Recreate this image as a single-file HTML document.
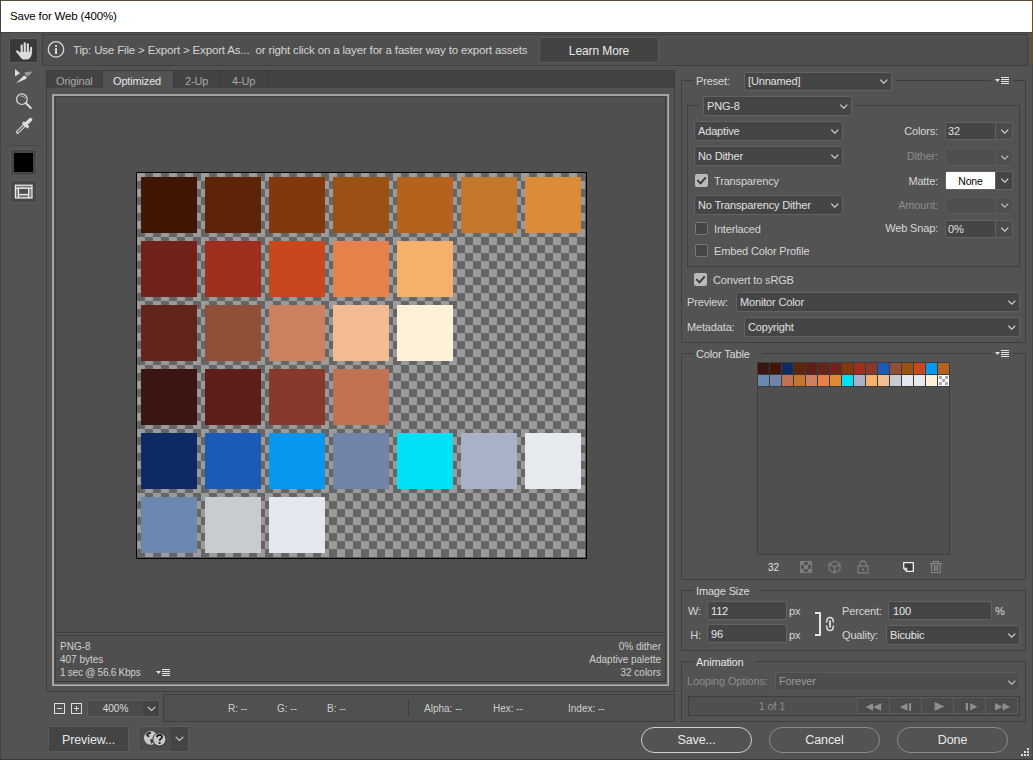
<!DOCTYPE html>
<html><head><meta charset="utf-8">
<style>
*{box-sizing:border-box;margin:0;padding:0}
html,body{width:1033px;height:760px;overflow:hidden;background:#535353}
body{position:relative;font-family:"Liberation Sans",sans-serif;font-size:11.5px;letter-spacing:-0.16px;color:#d6d6d6}
.a{position:absolute}
.t{position:absolute;white-space:nowrap;line-height:14px}
.dd{position:absolute;background:#454545;border:1px solid #626262;border-radius:2px}
.dd .tx{position:absolute;left:4px;top:2px;white-space:nowrap;line-height:14px;color:#e0e0e0}
.chev{position:absolute;width:10px;height:6px}
.fs{position:absolute;border:1px solid #3f3f3f}
.lg{position:absolute;background:#535353;padding:0 4px;line-height:14px;white-space:nowrap;color:#dcdcdc}
.cb{position:absolute;width:14px;height:14px;background:#454545;border:1px solid #626262;border-radius:2px}
.cbc{background:#8b8b8b;border-color:#8b8b8b}
.dis{color:#8a8a8a}
</style></head><body>
<!-- window frame -->
<div class="a" style="left:0;top:0;width:1033px;height:1px;background:#5a4a3a"></div>
<div class="a" style="left:0;top:0;width:1px;height:760px;background:#444"></div>
<div class="a" style="left:1032px;top:0;width:1px;height:64px;background:#6b4a2a"></div>
<div class="a" style="left:1032px;top:64px;width:1px;height:696px;background:#474747"></div>
<div class="a" style="left:0;top:759px;width:1033px;height:1px;background:#3a3a3a"></div>
<!-- title bar -->
<div class="a" style="left:1px;top:1px;width:1031px;height:31px;background:#fff"></div>
<div class="t" style="left:10px;top:9px;color:#000">Save for Web (400%)</div>
<div class="a" style="left:1px;top:32px;width:1031px;height:1px;background:#434343"></div>


<!-- left toolbar -->
<div class="a" style="left:9px;top:38px;width:29px;height:25px;background:#393939;border:1px solid #5c5c5c;border-radius:1px"></div>
<svg class="a" style="left:10px;top:38px" width="28" height="25" viewBox="0 0 28 25">
 <g fill="#dcdcdc">
  <rect x="10.6" y="6.6" width="2.1" height="9" rx="1"/>
  <rect x="13.7" y="4.3" width="2.1" height="11" rx="1"/>
  <rect x="16.8" y="5.3" width="2.1" height="10" rx="1"/>
  <rect x="19.9" y="8.8" width="2.1" height="8" rx="1" transform="rotate(6 21 12)"/>
  <path d="M10.2 14 L21.8 14 L21.4 17.5 Q20 21.5 16.5 21.6 L13.5 21.6 Q11.5 21 10 18.5 Z"/>
  <path d="M5.6 13.2 Q6.5 11.8 8 12.8 L11.5 16 L10.8 19.5 Z"/>
 </g>
</svg>
<svg class="a" style="left:12px;top:66px" width="26" height="20" viewBox="0 0 26 20">
 <path d="M3 3 L3 10.5 L8 7.3 Z" fill="#dcdcdc"/>
 <path d="M4 17.3 L12 9.6 L15 11 L14 13 Z" fill="#dcdcdc"/>
 <path d="M12.2 6.6 L21 5.3 L16 10.4 L13.5 9 Z" fill="#9a9a9a"/>
</svg>
<svg class="a" style="left:12px;top:89px" width="22" height="22" viewBox="0 0 22 22">
 <circle cx="9.9" cy="10.2" r="5.3" fill="none" stroke="#dcdcdc" stroke-width="1.2"/>
 <path d="M8.6 6.9 Q11.8 6.7 13.2 9.6" fill="none" stroke="#dcdcdc" stroke-width="0.8"/>
 <path d="M14 14.3 L18.8 19" stroke="#dcdcdc" stroke-width="2" stroke-linecap="round"/>
</svg>
<svg class="a" style="left:12px;top:116px" width="22" height="22" viewBox="0 0 22 22">
 <path d="M5.6 16.2 L12.8 9" stroke="#dcdcdc" stroke-width="3.3" stroke-linecap="round"/>
 <path d="M5.8 16 L11.8 10" stroke="#535353" stroke-width="1.1" stroke-linecap="round"/>
 <path d="M10.9 6.4 L16.4 11.6" stroke="#dcdcdc" stroke-width="3"/>
 <path d="M13.2 8.6 L18.6 3.7" stroke="#dcdcdc" stroke-width="3.6" stroke-linecap="round"/>
</svg>
<div class="a" style="left:5px;top:145px;width:37px;height:1px;background:#454545"></div>
<div class="a" style="left:10px;top:149px;width:27px;height:27px;background:#474747;border:1px solid #5b5b5b;border-radius:2px"></div>
<div class="a" style="left:14px;top:153px;width:19px;height:19px;background:#000"></div>
<div class="a" style="left:10px;top:180px;width:27px;height:23px;background:#474747;border:1px solid #5b5b5b;border-radius:2px"></div>
<svg class="a" style="left:14px;top:184px" width="19" height="15" viewBox="0 0 19 15">
 <rect x="1.4" y="1.2" width="16.6" height="12.8" fill="#7c7c7c" stroke="#ececec" stroke-width="1.2"/>
 <path d="M1.4 4.3 L18 4.3 M4.5 4.3 L4.5 14 M14.6 4.3 L14.6 14" stroke="#ececec" stroke-width="1.2"/>
 <rect x="4.5" y="4.3" width="10.1" height="6.2" fill="#4e4e4e" stroke="#ececec" stroke-width="1.2"/>
</svg>

<!-- tip bar -->
<div class="a" style="left:42px;top:34px;width:986px;height:32px;background:#4f4f4f;border:1px solid #3e3e3e"></div>
<svg class="a" style="left:47px;top:41px" width="18" height="18" viewBox="0 0 18 18">
 <circle cx="9" cy="8.4" r="7.7" fill="none" stroke="#dadada" stroke-width="1.3"/>
 <rect x="8.1" y="4.1" width="1.9" height="1.8" fill="#e0e0e0"/>
 <rect x="8.1" y="7.1" width="1.9" height="5.9" fill="#e0e0e0"/>
</svg>
<div class="t" style="left:73px;top:43px;color:#d4d4d4">Tip: Use File &gt; Export &gt; Export As...&nbsp; or right click on a layer for a faster way to export assets</div>
<div class="a" style="left:539px;top:37px;width:120px;height:26px;background:#434343;border:1px solid #5a5a5a;border-radius:2px"></div>
<div class="t" style="left:539px;top:44px;width:120px;text-align:center;color:#e8e8e8;font-size:12px;letter-spacing:-0.1px">Learn More</div>


<!-- view panel -->
<div class="a" style="left:46px;top:70px;width:629px;height:622px;background:#535353;border:1px solid #3d3d3d"></div>
<div class="a" style="left:47px;top:71px;width:627px;height:17px;background:#434343"></div>
<div class="a" style="left:103px;top:71px;width:70px;height:17px;background:#535353"></div>
<div class="a" style="left:173px;top:71px;width:1px;height:17px;background:#3d3d3d"></div>
<div class="a" style="left:220px;top:71px;width:1px;height:17px;background:#3d3d3d"></div>
<div class="a" style="left:267px;top:71px;width:1px;height:17px;background:#3d3d3d"></div>
<div class="a" style="left:102px;top:71px;width:1px;height:17px;background:#3d3d3d"></div>
<div class="t" style="font-size:11px;left:56px;top:74px;color:#a8a8a8">Original</div>
<div class="t" style="font-size:11px;left:113px;top:74px;color:#e6e6e6">Optimized</div>
<div class="t" style="font-size:11px;left:185px;top:74px;color:#a8a8a8">2-Up</div>
<div class="t" style="font-size:11px;left:232px;top:74px;color:#a8a8a8">4-Up</div>
<!-- frame -->
<div class="a" style="left:52px;top:94px;width:617px;height:592px;border:2px solid #a3a3a3;border-right-color:#b0b0b0;border-bottom-color:#b0b0b0"></div>
<div class="a" style="left:667px;top:96px;width:1px;height:589px;background:#8a8a8a"></div>
<div class="a" style="left:54px;top:684px;width:614px;height:1px;background:#8a8a8a"></div>
<div class="a" style="left:55px;top:96px;width:611px;height:537px;background:#4f4f4f;border:1px solid #3e3e3e"></div>
<div class="a" style="left:55px;top:635px;width:611px;height:47px;background:#4f4f4f;border:1px solid #3e3e3e"></div>
<div class="t" style="left:60px;top:640px;color:#cfcfcf;font-size:10px;letter-spacing:0">PNG-8</div>
<div class="t" style="left:60px;top:653px;color:#cfcfcf;font-size:10px;letter-spacing:0">407 bytes</div>
<div class="t" style="left:60px;top:666px;color:#cfcfcf;font-size:10px;letter-spacing:-0.25px">1 sec @ 56.6 Kbps</div>
<div class="t" style="left:561px;top:640px;width:100px;text-align:right;color:#cfcfcf;font-size:10px;letter-spacing:0">0% dither</div>
<div class="t" style="left:461px;top:653px;width:200px;text-align:right;color:#cfcfcf;font-size:10px;letter-spacing:0">Adaptive palette</div>
<div class="t" style="left:561px;top:666px;width:100px;text-align:right;color:#cfcfcf;font-size:10px;letter-spacing:0">32 colors</div>
<svg class="a" style="left:155px;top:669px" width="16" height="8" viewBox="0 0 16 8" shape-rendering="crispEdges">
 <path d="M1 2 L6 2 L3.5 5 Z" fill="#e6e6e6" shape-rendering="auto"/>
 <rect x="7" y="0" width="8" height="1" fill="#e6e6e6"/><rect x="7" y="2" width="8" height="1" fill="#e6e6e6"/>
 <rect x="7" y="4" width="8" height="1" fill="#e6e6e6"/><rect x="7" y="6" width="8" height="1" fill="#e6e6e6"/>
</svg>


<!-- image -->
<div class="a" style="left:136px;top:172px;width:451px;height:387px;background:#000"></div>
<div class="a" style="left:137px;top:173px;width:449px;height:385px;background:#555"></div>
<svg class="a" style="left:137px;top:173px" width="448" height="384" viewBox="0 0 448 384" shape-rendering="crispEdges">
 <defs><pattern id="chk" width="16" height="16" patternUnits="userSpaceOnUse">
  <rect width="16" height="16" fill="#656565"/><rect width="8" height="8" fill="#9b9b9b"/><rect x="8" y="8" width="8" height="8" fill="#9b9b9b"/>
 </pattern></defs>
 <rect width="448" height="384" fill="url(#chk)"/>
 <rect x="4" y="4" width="56" height="56" fill="#411504"/>
 <rect x="68" y="4" width="56" height="56" fill="#5e2408"/>
 <rect x="132" y="4" width="56" height="56" fill="#83370c"/>
 <rect x="196" y="4" width="56" height="56" fill="#9c5114"/>
 <rect x="260" y="4" width="56" height="56" fill="#b5621e"/>
 <rect x="324" y="4" width="56" height="56" fill="#c3772c"/>
 <rect x="388" y="4" width="56" height="56" fill="#dc8b36"/>
 <rect x="4" y="68" width="56" height="56" fill="#73221a"/>
 <rect x="68" y="68" width="56" height="56" fill="#9f2e1f"/>
 <rect x="132" y="68" width="56" height="56" fill="#c8471d"/>
 <rect x="196" y="68" width="56" height="56" fill="#e8804a"/>
 <rect x="260" y="68" width="56" height="56" fill="#f7af6c"/>
 <rect x="4" y="132" width="56" height="56" fill="#62251b"/>
 <rect x="68" y="132" width="56" height="56" fill="#914f37"/>
 <rect x="132" y="132" width="56" height="56" fill="#cc805e"/>
 <rect x="196" y="132" width="56" height="56" fill="#f3bb92"/>
 <rect x="260" y="132" width="56" height="56" fill="#fef1d7"/>
 <rect x="4" y="196" width="56" height="56" fill="#3b1511"/>
 <rect x="68" y="196" width="56" height="56" fill="#5e1f1b"/>
 <rect x="132" y="196" width="56" height="56" fill="#88392c"/>
 <rect x="196" y="196" width="56" height="56" fill="#c07253"/>
 <rect x="4" y="260" width="56" height="56" fill="#0c2a63"/>
 <rect x="68" y="260" width="56" height="56" fill="#1a5bb8"/>
 <rect x="132" y="260" width="56" height="56" fill="#0897ee"/>
 <rect x="196" y="260" width="56" height="56" fill="#7183a8"/>
 <rect x="260" y="260" width="56" height="56" fill="#00e1f6"/>
 <rect x="324" y="260" width="56" height="56" fill="#a8b1c8"/>
 <rect x="388" y="260" width="56" height="56" fill="#e6e9ed"/>
 <rect x="4" y="324" width="56" height="56" fill="#6b88b1"/>
 <rect x="68" y="324" width="56" height="56" fill="#c8ccd1"/>
 <rect x="132" y="324" width="56" height="56" fill="#e3e8ef"/>
</svg>


<!-- bottom bar -->
<div class="a" style="left:54px;top:703px;width:11px;height:11px;border:1px solid #dcdcdc"></div>
<div class="a" style="left:57px;top:708px;width:5px;height:1px;background:#dcdcdc"></div>
<div class="a" style="left:71px;top:703px;width:11px;height:11px;border:1px solid #dcdcdc"></div>
<div class="a" style="left:74px;top:708px;width:5px;height:1px;background:#dcdcdc"></div>
<div class="a" style="left:76px;top:706px;width:1px;height:5px;background:#dcdcdc"></div>
<div class="a" style="left:87px;top:700px;width:73px;height:17px;background:#4b4b4b;border:1px solid #5c5c5c;border-radius:1px"></div>
<div class="a" style="left:143px;top:701px;width:16px;height:15px;background:#434343"></div>
<svg class="a" style="left:147px;top:706px" width="9" height="6" viewBox="0 0 9 6"><path d="M0.7 0.8 L4.5 4.5 L8.3 0.8" fill="none" stroke="#d0d0d0" stroke-width="1.1"/></svg>
<div class="t" style="left:88px;top:702px;width:55px;text-align:center;color:#dcdcdc;font-size:10px;letter-spacing:0">400%</div>
<div class="a" style="left:163px;top:694px;width:512px;height:28px;background:#505050;border:1px solid #3e3e3e"></div>
<div class="a" style="left:408px;top:700px;width:1px;height:16px;background:#3e3e3e"></div>
<div class="t" style="left:228px;top:702px;color:#cfcfcf;font-size:10px;letter-spacing:0">R: --</div>
<div class="t" style="left:277px;top:702px;color:#cfcfcf;font-size:10px;letter-spacing:0">G: --</div>
<div class="t" style="left:327px;top:702px;color:#cfcfcf;font-size:10px;letter-spacing:0">B: --</div>
<div class="t" style="left:424px;top:702px;color:#cfcfcf;font-size:10px;letter-spacing:0">Alpha: --</div>
<div class="t" style="left:493px;top:702px;color:#cfcfcf;font-size:10px;letter-spacing:0">Hex: --</div>
<div class="t" style="left:568px;top:702px;color:#cfcfcf;font-size:10px;letter-spacing:0">Index: --</div>
<div class="a" style="left:48px;top:726px;width:81px;height:26px;background:#444;border:1px solid #5a5a5a;border-radius:2px"></div>
<div class="t" style="left:48px;top:733px;width:81px;text-align:center;color:#e6e6e6;font-size:12.5px;letter-spacing:-0.1px">Preview...</div>
<div class="a" style="left:138px;top:726px;width:51px;height:26px;background:#4c4c4c;border:1px solid #5a5a5a;border-radius:2px"></div>
<div class="a" style="left:171px;top:727px;width:17px;height:24px;background:#444"></div>
<svg class="a" style="left:175px;top:736px" width="9" height="6" viewBox="0 0 9 6"><path d="M0.7 0.8 L4.5 4.5 L8.3 0.8" fill="none" stroke="#d0d0d0" stroke-width="1.1"/></svg>
<svg class="a" style="left:142px;top:729px" width="24" height="20" viewBox="0 0 24 20">
 <circle cx="8.8" cy="8.8" r="6.9" fill="#c9c9c9"/>
 <path d="M3.5 5.5 Q5 3 8 2.6 L9.5 3.5 L8.5 5 L6.5 5.3 L7.8 7.5 L6 8.5 Z" fill="#3a3a3a"/>
 <path d="M8.2 10 L10.5 10.5 L11 13 L9.5 15 L8.6 13 Z" fill="#3a3a3a"/>
 <circle cx="17.4" cy="10.4" r="6.6" fill="#c9c9c9" stroke="#2e2e2e" stroke-width="1"/>
 <path d="M15 8.2 Q15 5.8 17.5 5.8 Q20 5.8 20 8 Q20 9.3 18.6 10 Q17.6 10.6 17.6 11.8" fill="none" stroke="#111" stroke-width="1.7"/>
 <rect x="16.7" y="13.1" width="1.8" height="1.8" fill="#111"/>
</svg>

<!-- right panel -->
<div class="fs" style="left:681px;top:80px;width:345px;height:263px"></div>
<div class="a" style="left:694px;top:72px;width:51px;height:18px;background:#535353"></div>
<div class="t" style="font-size:11px;left:696px;top:74px;color:#d6d6d6">Preset:</div>
<div class="a" style="left:891px;top:72px;width:4px;height:18px;background:#535353"></div>
<div class="a" style="left:744px;top:72px;width:148px;height:19px;background:#454545;border:1px solid #626262;border-radius:2px"></div>
<div class="t" style="font-size:11px;left:748px;top:74px;color:#e0e0e0">[Unnamed]</div>
<svg class="a" style="left:880px;top:79px" width="8" height="5" viewBox="0 0 8 5"><path d="M0.3 0.7 L3.8 4.2 L7.3 0.7" fill="none" stroke="#d4d4d4" stroke-width="1.15"/></svg>
<div class="a" style="left:991px;top:76px;width:22px;height:10px;background:#535353"></div>
<svg class="a" style="left:995px;top:77px" width="15" height="8" viewBox="0 0 15 8" shape-rendering="crispEdges"><path d="M0 2 L5 2 L2.5 5 Z" fill="#e6e6e6" shape-rendering="auto"/><rect x="6" y="0" width="8" height="1" fill="#e6e6e6"/><rect x="6" y="2" width="8" height="1" fill="#e6e6e6"/><rect x="6" y="4" width="8" height="1" fill="#e6e6e6"/><rect x="6" y="6" width="8" height="1" fill="#e6e6e6"/></svg>
<div class="fs" style="left:687px;top:105px;width:333px;height:162px"></div>
<div class="a" style="left:700px;top:96px;width:154px;height:20px;background:#535353"></div>
<div class="a" style="left:703px;top:96px;width:149px;height:20px;background:#454545;border:1px solid #626262;border-radius:2px"></div>
<div class="t" style="font-size:11px;left:707px;top:99px;color:#e0e0e0">PNG-8</div>
<svg class="a" style="left:840px;top:104px" width="8" height="5" viewBox="0 0 8 5"><path d="M0.3 0.7 L3.8 4.2 L7.3 0.7" fill="none" stroke="#d4d4d4" stroke-width="1.15"/></svg>
<div class="a" style="left:694px;top:121px;width:149px;height:20px;background:#454545;border:1px solid #626262;border-radius:2px"></div>
<div class="t" style="font-size:11px;left:698px;top:124px;color:#e0e0e0">Adaptive</div>
<svg class="a" style="left:831px;top:129px" width="8" height="5" viewBox="0 0 8 5"><path d="M0.3 0.7 L3.8 4.2 L7.3 0.7" fill="none" stroke="#d4d4d4" stroke-width="1.15"/></svg>
<div class="a" style="left:694px;top:146px;width:149px;height:20px;background:#454545;border:1px solid #626262;border-radius:2px"></div>
<div class="t" style="font-size:11px;left:698px;top:149px;color:#e0e0e0">No Dither</div>
<svg class="a" style="left:831px;top:154px" width="8" height="5" viewBox="0 0 8 5"><path d="M0.3 0.7 L3.8 4.2 L7.3 0.7" fill="none" stroke="#d4d4d4" stroke-width="1.15"/></svg>
<div class="a" style="left:695px;top:174px;width:13px;height:13px;background:#b9b9b9;border-radius:2px"></div>
<svg class="a" style="left:695px;top:174px" width="13" height="13" viewBox="0 0 13 13"><path d="M2.3 6.2 L5.5 9.4 L10.8 3.3" fill="none" stroke="#3a3a3a" stroke-width="1.9"/></svg>
<div class="t" style="font-size:11px;left:714px;top:174px;color:#d6d6d6">Transparency</div>
<div class="a" style="left:694px;top:195px;width:149px;height:20px;background:#454545;border:1px solid #626262;border-radius:2px"></div>
<div class="t" style="font-size:11px;left:698px;top:198px;color:#e0e0e0">No Transparency Dither</div>
<svg class="a" style="left:831px;top:203px" width="8" height="5" viewBox="0 0 8 5"><path d="M0.3 0.7 L3.8 4.2 L7.3 0.7" fill="none" stroke="#d4d4d4" stroke-width="1.15"/></svg>
<div class="a" style="left:695px;top:222px;width:13px;height:13px;background:#454545;border:1px solid #777;border-radius:2px"></div>
<div class="t" style="font-size:11px;left:714px;top:222px;color:#d6d6d6">Interlaced</div>
<div class="a" style="left:695px;top:244px;width:13px;height:13px;background:#454545;border:1px solid #777;border-radius:2px"></div>
<div class="t" style="font-size:11px;left:714px;top:244px;color:#d6d6d6">Embed Color Profile</div>
<div class="t" style="font-size:11px;left:788px;top:124px;width:150px;text-align:right;color:#d6d6d6">Colors:</div>
<div class="a" style="left:945px;top:122px;width:68px;height:18px;background:#454545;border:1px solid #626262;border-radius:2px"></div>
<div class="a" style="left:995px;top:123px;width:17px;height:16px;background:#4a4a4a;border-left:1px solid #626262"></div>
<div class="t" style="font-size:11px;left:948px;top:124px;color:#e0e0e0">32</div>
<svg class="a" style="left:1001px;top:129px" width="8" height="5" viewBox="0 0 8 5"><path d="M0.3 0.7 L3.8 4.2 L7.3 0.7" fill="none" stroke="#d4d4d4" stroke-width="1.15"/></svg>
<div class="t" style="font-size:11px;left:788px;top:149px;width:150px;text-align:right;color:#8c8c8c">Dither:</div>
<div class="a" style="left:945px;top:148px;width:68px;height:18px;background:#4f4f4f;border:1px solid #5a5a5a;border-radius:2px"></div>
<div class="a" style="left:995px;top:149px;width:17px;height:16px;background:#4f4f4f;border-left:1px solid #5a5a5a"></div>
<svg class="a" style="left:1001px;top:155px" width="8" height="5" viewBox="0 0 8 5"><path d="M0.3 0.7 L3.8 4.2 L7.3 0.7" fill="none" stroke="#bdbdbd" stroke-width="1.15"/></svg>
<div class="t" style="font-size:11px;left:788px;top:174px;width:150px;text-align:right;color:#d6d6d6">Matte:</div>
<div class="a" style="left:945px;top:171px;width:68px;height:19px;background:#fff;border:1px solid #626262;border-radius:2px"></div>
<div class="a" style="left:995px;top:172px;width:17px;height:17px;background:#444;border-left:1px solid #626262"></div>
<svg class="a" style="left:1001px;top:178px" width="8" height="5" viewBox="0 0 8 5"><path d="M0.3 0.7 L3.8 4.2 L7.3 0.7" fill="none" stroke="#d4d4d4" stroke-width="1.15"/></svg>
<div class="t" style="font-size:11px;left:946px;top:174px;width:49px;text-align:center;color:#000;font-size:10.5px">None</div>
<div class="t" style="font-size:11px;left:788px;top:198px;width:150px;text-align:right;color:#8c8c8c">Amount:</div>
<div class="a" style="left:945px;top:197px;width:68px;height:17px;background:#4f4f4f;border:1px solid #5a5a5a;border-radius:2px"></div>
<div class="a" style="left:995px;top:198px;width:17px;height:15px;background:#4f4f4f;border-left:1px solid #5a5a5a"></div>
<svg class="a" style="left:1001px;top:203px" width="8" height="5" viewBox="0 0 8 5"><path d="M0.3 0.7 L3.8 4.2 L7.3 0.7" fill="none" stroke="#bdbdbd" stroke-width="1.15"/></svg>
<div class="t" style="font-size:11px;left:788px;top:221px;width:150px;text-align:right;color:#d6d6d6">Web Snap:</div>
<div class="a" style="left:945px;top:220px;width:68px;height:18px;background:#454545;border:1px solid #626262;border-radius:2px"></div>
<div class="a" style="left:995px;top:221px;width:17px;height:16px;background:#4a4a4a;border-left:1px solid #626262"></div>
<div class="t" style="font-size:11px;left:948px;top:222px;color:#e0e0e0">0%</div>
<svg class="a" style="left:1001px;top:227px" width="8" height="5" viewBox="0 0 8 5"><path d="M0.3 0.7 L3.8 4.2 L7.3 0.7" fill="none" stroke="#d4d4d4" stroke-width="1.15"/></svg>
<div class="a" style="left:694px;top:273px;width:13px;height:13px;background:#b9b9b9;border-radius:2px"></div>
<svg class="a" style="left:694px;top:273px" width="13" height="13" viewBox="0 0 13 13"><path d="M2.3 6.2 L5.5 9.4 L10.8 3.3" fill="none" stroke="#3a3a3a" stroke-width="1.9"/></svg>
<div class="t" style="font-size:11px;left:713px;top:273px;color:#d6d6d6">Convert to sRGB</div>
<div class="t" style="font-size:11px;left:687px;top:295px;color:#d6d6d6">Preview:</div>
<div class="a" style="left:736px;top:292px;width:284px;height:20px;background:#454545;border:1px solid #626262;border-radius:2px"></div>
<div class="t" style="font-size:11px;left:740px;top:295px;color:#e0e0e0">Monitor Color</div>
<svg class="a" style="left:1008px;top:300px" width="8" height="5" viewBox="0 0 8 5"><path d="M0.3 0.7 L3.8 4.2 L7.3 0.7" fill="none" stroke="#d4d4d4" stroke-width="1.15"/></svg>
<div class="t" style="font-size:11px;left:687px;top:320px;color:#d6d6d6">Metadata:</div>
<div class="a" style="left:744px;top:317px;width:276px;height:20px;background:#454545;border:1px solid #626262;border-radius:2px"></div>
<div class="t" style="font-size:11px;left:748px;top:320px;color:#e0e0e0">Copyright</div>
<svg class="a" style="left:1008px;top:325px" width="8" height="5" viewBox="0 0 8 5"><path d="M0.3 0.7 L3.8 4.2 L7.3 0.7" fill="none" stroke="#d4d4d4" stroke-width="1.15"/></svg>

<!-- color table -->
<div class="fs" style="left:681px;top:353px;width:345px;height:227px"></div>
<div class="a" style="left:694px;top:345px;width:68px;height:16px;background:#535353;border-radius:0px;"></div>
<div class="t" style="font-size:11px;left:696px;top:347px;color:#dcdcdc;">Color Table</div>
<div class="a" style="left:991px;top:348px;width:22px;height:10px;background:#535353;border-radius:0px;"></div>
<svg class="a" style="left:995px;top:350px" width="15" height="8" viewBox="0 0 15 8" shape-rendering="crispEdges"><path d="M0 2 L5 2 L2.5 5 Z" fill="#e6e6e6" shape-rendering="auto"/><rect x="6" y="0" width="8" height="1" fill="#e6e6e6"/><rect x="6" y="2" width="8" height="1" fill="#e6e6e6"/><rect x="6" y="4" width="8" height="1" fill="#e6e6e6"/><rect x="6" y="6" width="8" height="1" fill="#e6e6e6"/></svg>
<div class="a" style="left:757px;top:362px;width:193px;height:193px;background:#4f4f4f;border:1px solid #3e3e3e;border-radius:0px;"></div>
<svg class="a" style="left:757px;top:362px" width="193" height="25" viewBox="0 0 193 25" shape-rendering="crispEdges"><rect width="193" height="25" fill="#3c3c3c"/><rect x="1" y="1" width="11" height="11" fill="#3b1511"/><rect x="13" y="1" width="11" height="11" fill="#411504"/><rect x="25" y="1" width="11" height="11" fill="#0c2a63"/><rect x="37" y="1" width="11" height="11" fill="#5e2408"/><rect x="49" y="1" width="11" height="11" fill="#5e1f1b"/><rect x="61" y="1" width="11" height="11" fill="#62251b"/><rect x="73" y="1" width="11" height="11" fill="#73221a"/><rect x="85" y="1" width="11" height="11" fill="#83370c"/><rect x="97" y="1" width="11" height="11" fill="#9f2e1f"/><rect x="109" y="1" width="11" height="11" fill="#88392c"/><rect x="121" y="1" width="11" height="11" fill="#1a5bb8"/><rect x="133" y="1" width="11" height="11" fill="#914f37"/><rect x="145" y="1" width="11" height="11" fill="#9c5114"/><rect x="157" y="1" width="11" height="11" fill="#c8471d"/><rect x="169" y="1" width="11" height="11" fill="#0897ee"/><rect x="181" y="1" width="11" height="11" fill="#b5621e"/><rect x="1" y="13" width="11" height="11" fill="#6b88b1"/><rect x="13" y="13" width="11" height="11" fill="#7183a8"/><rect x="25" y="13" width="11" height="11" fill="#c07253"/><rect x="37" y="13" width="11" height="11" fill="#c3772c"/><rect x="49" y="13" width="11" height="11" fill="#cc805e"/><rect x="61" y="13" width="11" height="11" fill="#e8804a"/><rect x="73" y="13" width="11" height="11" fill="#dc8b36"/><rect x="85" y="13" width="11" height="11" fill="#00e1f6"/><rect x="97" y="13" width="11" height="11" fill="#a8b1c8"/><rect x="109" y="13" width="11" height="11" fill="#f7af6c"/><rect x="121" y="13" width="11" height="11" fill="#f3bb92"/><rect x="133" y="13" width="11" height="11" fill="#c8ccd1"/><rect x="145" y="13" width="11" height="11" fill="#e3e8ef"/><rect x="157" y="13" width="11" height="11" fill="#e6e9ed"/><rect x="169" y="13" width="11" height="11" fill="#fef1d7"/><rect x="181" y="13" width="11" height="11" fill="#fff"/><rect x="182" y="14" width="3" height="3" fill="#aaa"/><rect x="188" y="14" width="3" height="3" fill="#aaa"/><rect x="185" y="17" width="3" height="3" fill="#aaa"/><rect x="182" y="20" width="3" height="3" fill="#aaa"/><rect x="188" y="20" width="3" height="3" fill="#aaa"/></svg>
<div class="t" style="font-size:10px;left:768px;top:561px;color:#e0e0e0;letter-spacing:0">32</div>
<svg class="a" style="left:800px;top:561px" width="12" height="12" viewBox="0 0 12 12" shape-rendering="crispEdges">
 <rect x="0.5" y="0.5" width="11" height="11" fill="none" stroke="#7c7c7c"/><rect x="1" y="1" width="3.3" height="3.3" fill="#7c7c7c"/><rect x="7.7" y="1" width="3.3" height="3.3" fill="#7c7c7c"/><rect x="4.3" y="4.3" width="3.4" height="3.4" fill="#7c7c7c"/><rect x="1" y="7.7" width="3.3" height="3.3" fill="#7c7c7c"/><rect x="7.7" y="7.7" width="3.3" height="3.3" fill="#7c7c7c"/></svg>
<svg class="a" style="left:828px;top:560px" width="13" height="14" viewBox="0 0 13 14">
 <path d="M6.5 1 L12 4 L12 10 L6.5 13 L1 10 L1 4 Z M1 4 L6.5 7 L12 4 M6.5 7 L6.5 13" fill="none" stroke="#7c7c7c" stroke-width="1.3" stroke-linejoin="round"/></svg>
<svg class="a" style="left:857px;top:560px" width="12" height="14" viewBox="0 0 12 14">
 <path d="M3 6 L3 4 Q3 1 6 1 Q9 1 9 4 L9 6" fill="none" stroke="#7c7c7c" stroke-width="1.3"/>
 <rect x="1" y="6" width="10" height="7" fill="none" stroke="#7c7c7c" stroke-width="1.3"/><rect x="5" y="8.5" width="2" height="2" fill="#7c7c7c"/></svg>
<svg class="a" style="left:902px;top:561px" width="13" height="13" viewBox="0 0 13 13">
 <path d="M1.7 1.7 L11.3 1.7 L11.3 10.3 L4.7 10.3 L1.7 7.3 Z" fill="#3c3c3c" stroke="#efefef" stroke-width="1.3" stroke-linejoin="miter"/>
 <path d="M1.7 7.3 L4.7 7.3 L4.7 10.3" fill="none" stroke="#efefef" stroke-width="1.1"/>
</svg>
<svg class="a" style="left:929px;top:560px" width="14" height="14" viewBox="0 0 14 14">
 <path d="M1 3.6 L12.8 3.6 M4.3 3.3 L4.3 1.5 L9.5 1.5 L9.5 3.3 M2.6 4 L2.6 12.5 L11.2 12.5 L11.2 4 M5.4 5.2 L5.4 11 M7 5.2 L7 11 M8.6 5.2 L8.6 11" fill="none" stroke="#878787" stroke-width="1.1"/>
</svg>
<!-- image size -->
<div class="fs" style="left:681px;top:590px;width:345px;height:61px"></div>
<div class="a" style="left:694px;top:582px;width:66px;height:16px;background:#535353;border-radius:0px;"></div>
<div class="t" style="font-size:11px;left:696px;top:584px;color:#dcdcdc;">Image Size</div>
<div class="t" style="font-size:11px;left:651px;top:604px;color:#d6d6d6;width:50px;text-align:right">W:</div>
<div class="a" style="left:707px;top:601px;width:80px;height:19px;background:#454545;border:1px solid #626262;border-radius:1px;"></div>
<div class="t" style="font-size:11px;left:711px;top:604px;color:#e6e6e6;">112</div>
<div class="t" style="font-size:11px;left:789px;top:604px;color:#d6d6d6;">px</div>
<div class="t" style="font-size:11px;left:651px;top:628px;color:#d6d6d6;width:50px;text-align:right">H:</div>
<div class="a" style="left:707px;top:624px;width:80px;height:19px;background:#454545;border:1px solid #626262;border-radius:1px;"></div>
<div class="t" style="font-size:11px;left:711px;top:627px;color:#e6e6e6;">96</div>
<div class="t" style="font-size:11px;left:789px;top:628px;color:#d6d6d6;">px</div>
<svg class="a" style="left:810px;top:605px" width="30" height="35" viewBox="0 0 30 35">
 <path d="M5 8 L10 8 L10 30 L5 30" fill="none" stroke="#e6e6e6" stroke-width="2"/>
 <path d="M16.6 17.6 Q16.6 12.4 20 12.4 Q23.4 12.4 23.4 17.6" fill="none" stroke="#e0e0e0" stroke-width="1.5"/>
 <path d="M16.6 20.4 Q16.6 25.6 20 25.6 Q23.4 25.6 23.4 20.4" fill="none" stroke="#e0e0e0" stroke-width="1.5"/>
 <rect x="19.1" y="15.5" width="1.8" height="7" fill="#e0e0e0"/>
</svg>
<div class="t" style="font-size:11px;left:842px;top:604px;color:#d6d6d6;">Percent:</div>
<div class="a" style="left:888px;top:601px;width:104px;height:19px;background:#454545;border:1px solid #626262;border-radius:1px;"></div>
<div class="t" style="font-size:11px;left:893px;top:604px;color:#e6e6e6;">100</div>
<div class="t" style="font-size:11px;left:995px;top:604px;color:#d6d6d6;">%</div>
<div class="t" style="font-size:11px;left:842px;top:628px;color:#d6d6d6;">Quality:</div>
<div class="a" style="left:886px;top:625px;width:134px;height:20px;background:#454545;border:1px solid #626262;border-radius:2px;"></div>
<div class="t" style="font-size:11px;left:890px;top:628px;color:#e6e6e6;">Bicubic</div>
<svg class="a" style="left:1008px;top:633px" width="8" height="5" viewBox="0 0 8 5"><path d="M0.3 0.7 L3.8 4.2 L7.3 0.7" fill="none" stroke="#d4d4d4" stroke-width="1.15"/></svg>
<!-- animation -->
<div class="fs" style="left:681px;top:661px;width:345px;height:61px"></div>
<div class="a" style="left:694px;top:653px;width:61px;height:16px;background:#535353;border-radius:0px;"></div>
<div class="t" style="font-size:11px;left:696px;top:655px;color:#e6e6e6;">Animation</div>
<div class="t" style="font-size:11px;left:687px;top:674px;color:#8c8c8c;">Looping Options:</div>
<div class="a" style="left:775px;top:672px;width:245px;height:19px;background:#4d4d4d;border:1px solid #5a5a5a;border-radius:2px;"></div>
<div class="t" style="font-size:11px;left:779px;top:674px;color:#9a9a9a;">Forever</div>
<svg class="a" style="left:1008px;top:680px" width="8" height="5" viewBox="0 0 8 5"><path d="M0.3 0.7 L3.8 4.2 L7.3 0.7" fill="none" stroke="#c4c4c4" stroke-width="1.15"/></svg>
<div class="a" style="left:688px;top:696px;width:332px;height:20px;background:#4f4f4f;border:1px solid #3e3e3e;border-radius:0px;"></div>
<div class="t" style="font-size:11px;left:687px;top:699px;color:#8c8c8c;width:170px;text-align:center">1 of 1</div>
<div class="a" style="left:857px;top:697px;width:33px;height:17px;background:#4b4b4b;border:1px solid #5c5c5c;border-radius:0px;"></div>
<div class="a" style="left:889px;top:697px;width:33px;height:17px;background:#4b4b4b;border:1px solid #5c5c5c;border-radius:0px;"></div>
<div class="a" style="left:921px;top:697px;width:33px;height:17px;background:#4b4b4b;border:1px solid #5c5c5c;border-radius:0px;"></div>
<div class="a" style="left:953px;top:697px;width:33px;height:17px;background:#4b4b4b;border:1px solid #5c5c5c;border-radius:0px;"></div>
<div class="a" style="left:985px;top:697px;width:33px;height:17px;background:#4b4b4b;border:1px solid #5c5c5c;border-radius:0px;"></div>
<svg class="a" style="left:857px;top:697px" width="161" height="17" viewBox="0 0 161 17">
 <path d="M8.7 10 L16 6.2 L16 13.8 Z M16 10 L24.2 6.2 L24.2 13.8 Z" fill="#8e8e8e"/>
 <path d="M42.9 10 L50.5 6.2 L50.5 13.8 Z" fill="#8e8e8e"/><rect x="52" y="6.2" width="2.1" height="7.6" fill="#8e8e8e"/>
 <path d="M77.6 5 L87.4 9.5 L77.6 14 Z" fill="#8e8e8e"/>
 <rect x="108.8" y="6" width="2.2" height="7.6" fill="#8e8e8e"/><path d="M113.2 6 L120.4 9.8 L113.2 13.6 Z" fill="#8e8e8e"/>
 <path d="M138 6 L145.6 9.8 L138 13.6 Z M145.6 6 L153.1 9.8 L145.6 13.6 Z" fill="#8e8e8e"/>
</svg>
<!-- buttons -->
<div class="a" style="left:641px;top:727px;width:111px;height:26px;border:1.5px solid #cfcfcf;border-radius:13px"></div>
<div class="t" style="font-size:12.5px;left:641px;top:733px;color:#eaeaea;width:111px;text-align:center;letter-spacing:-0.1px">Save...</div>
<div class="a" style="left:769px;top:727px;width:111px;height:26px;border:1px solid #8a8a8a;border-radius:13px"></div>
<div class="t" style="font-size:12.5px;left:769px;top:733px;color:#eaeaea;width:111px;text-align:center;letter-spacing:-0.1px">Cancel</div>
<div class="a" style="left:897px;top:727px;width:111px;height:26px;border:1px solid #8a8a8a;border-radius:13px"></div>
<div class="t" style="font-size:12.5px;left:897px;top:733px;color:#eaeaea;width:111px;text-align:center;letter-spacing:-0.1px">Done</div>
<svg class="a" style="left:1021px;top:748px" width="9" height="9" viewBox="0 0 9 9" shape-rendering="crispEdges">
 <rect x="6" y="0" width="2" height="2" fill="#ddd"/><rect x="3" y="3" width="2" height="2" fill="#ddd"/><rect x="6" y="3" width="2" height="2" fill="#ddd"/>
 <rect x="0" y="6" width="2" height="2" fill="#ddd"/><rect x="3" y="6" width="2" height="2" fill="#ddd"/><rect x="6" y="6" width="2" height="2" fill="#ddd"/></svg>

</body></html>
